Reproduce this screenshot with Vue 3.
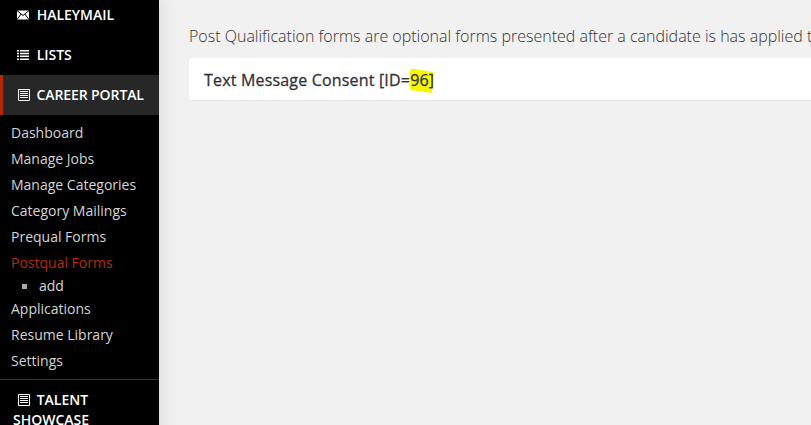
<template>
  <div class="layout">
    <aside class="sidebar">
      <a v-for="item in topItems" :key="item.label" class="nav-head" :class="{ active: item.active }">
        <svg v-if="item.icon === 'mail'" class="icon" viewBox="0 0 12 12">
          <path d="M0 1.500h12v9H0z" fill="#fff" />
          <path d="M0 1.500 6 6.500l6-5M0 10.500 4.200 5M12 10.500 7.800 5" fill="none" stroke="#000" stroke-width="1" />
        </svg>
        <svg v-else-if="item.icon === 'list'" class="icon" viewBox="0 0 12 12">
          <path d="M0 1h2v1.500H0zM3 1h9v1.500H3zM0 3.800h2v1.500H0zM3 3.800h9v1.500H3zM0 6.600h2v1.500H0zM3 6.600h9v1.500H3zM0 9.400h2v1.500H0zM3 9.400h9v1.500H3z" fill="#fff" />
        </svg>
        <svg v-else class="icon" viewBox="0 0 12 12">
          <path d="M0.500 0.500h11v11h-11z" fill="none" stroke="#fff" />
          <path d="M2 2.500h8M2 4.500h8M2 6.500h8M2 8.500h8" stroke="#fff" />
        </svg>
        {{ item.label }}
      </a>

      <ul class="sub-menu">
        <template v-for="link in links" :key="link.label">
          <li class="sub-item" :class="{ current: link.current }">{{ link.label }}</li>
          <li v-if="link.child" class="child-item"><span class="bullet"></span>{{ link.child }}</li>
        </template>
      </ul>

      <a class="nav-head talent">
        <svg class="icon" viewBox="0 0 12 12">
          <path d="M0.500 0.500h11v11h-11z" fill="none" stroke="#fff" />
          <path d="M2 2.500h8M2 4.500h8M2 6.500h8M2 8.500h8" stroke="#fff" />
        </svg>
        TALENT SHOWCASE
      </a>
    </aside>

    <main class="content">
      <p class="intro">Post Qualification forms are optional forms presented after a candidate is has applied to a job posting on your career portal.</p>
      <div class="form-card">
        <span class="form-title">Text Message Consent [ID=<span class="marked">96]</span></span>
      </div>
    </main>
  </div>
</template>

<script setup>
const topItems = [
  { label: 'HALEYMAIL', icon: 'mail' },
  { label: 'LISTS', icon: 'list' },
  { label: 'CAREER PORTAL', icon: 'doc', active: true }
]

const links = [
  { label: 'Dashboard' },
  { label: 'Manage Jobs' },
  { label: 'Manage Categories' },
  { label: 'Category Mailings' },
  { label: 'Prequal Forms' },
  { label: 'Postqual Forms', current: true, child: 'add' },
  { label: 'Applications' },
  { label: 'Resume Library' },
  { label: 'Settings' }
]
</script>

<style>
html, body {
  margin: 0;
  overflow: hidden;
}
</style>

<style scoped>
.layout {
  display: flex;
  height: 425px;
  overflow: hidden;
  background: #f1f1f1;
  font-family: "Open Sans", sans-serif;
}

.sidebar {
  flex: 0 0 159px;
  margin-top: -5px;
  background: #000;
  box-shadow: 4px 0 16px rgba(0, 0, 0, 0.08);
  height: 470px;
}

.nav-head {
  display: block;
  height: 40px;
  line-height: 40px;
  padding-left: 17px;
  color: #fff;
  font-size: 14px;
  font-weight: 600;
  white-space: nowrap;
}

.nav-head.active {
  background: #272727;
  border-left: 3px solid #b52a05;
  padding-left: 15px;
  letter-spacing: -0.1px;
}

.nav-head.active .icon {
  margin-right: 3px;
}

.icon {
  width: 12px;
  height: 12px;
  margin-right: 4px;
  vertical-align: -1px;
}

.sub-menu {
  list-style: none;
  margin: 0;
  padding: 5px 0;
  border-bottom: 1px solid #333;
}

.sub-item {
  height: 26px;
  line-height: 26px;
  padding-left: 11px;
  color: #d4d4d4;
  font-size: 14px;
  white-space: nowrap;
}

.sub-item.current {
  color: #b52a05;
}

.child-item {
  height: 20px;
  line-height: 20px;
  padding-left: 22px;
  color: #d4d4d4;
  font-size: 14px;
  display: flex;
  align-items: center;
}

.bullet {
  width: 5px;
  height: 5px;
  background: #aaa;
  margin-right: 12px;
}

.talent {
  height: auto;
  line-height: 20px;
  padding: 10px 0 0 13px;
  white-space: normal;
  text-indent: 5px;
}

.talent .icon {
  margin-right: 3px;
}

.content {
  flex: 1;
  min-width: 0;
  padding: 26px 0 0 30px;
}

.intro {
  margin: 0 0 11px;
  font-size: 16px;
  line-height: 21px;
  font-weight: 300;
  color: #333;
  white-space: nowrap;
}

.form-card {
  height: 42px;
  line-height: 44px;
  padding-left: 15px;
  margin-right: -10px;
  background: #fff;
  border-radius: 3px;
  border-bottom: 1px solid #e6e6e6;
  isolation: isolate;
}

.form-title {
  font-size: 16px;
  font-weight: 400;
  letter-spacing: 0.18px;
  color: #333;
  -webkit-text-stroke: 0.3px #333;
  white-space: nowrap;
}

/* hand drawn marker stroke from the screenshot */
.marked {
  position: relative;
}

.marked::before {
  content: "";
  position: absolute;
  z-index: -1;
  left: 0;
  top: -2px;
  width: 24px;
  height: 26px;
  background: #f7f700;
  clip-path: polygon(0 2px, 5px 2px, 23px 5px, 22px 26px, 0 23px);
}
</style>
